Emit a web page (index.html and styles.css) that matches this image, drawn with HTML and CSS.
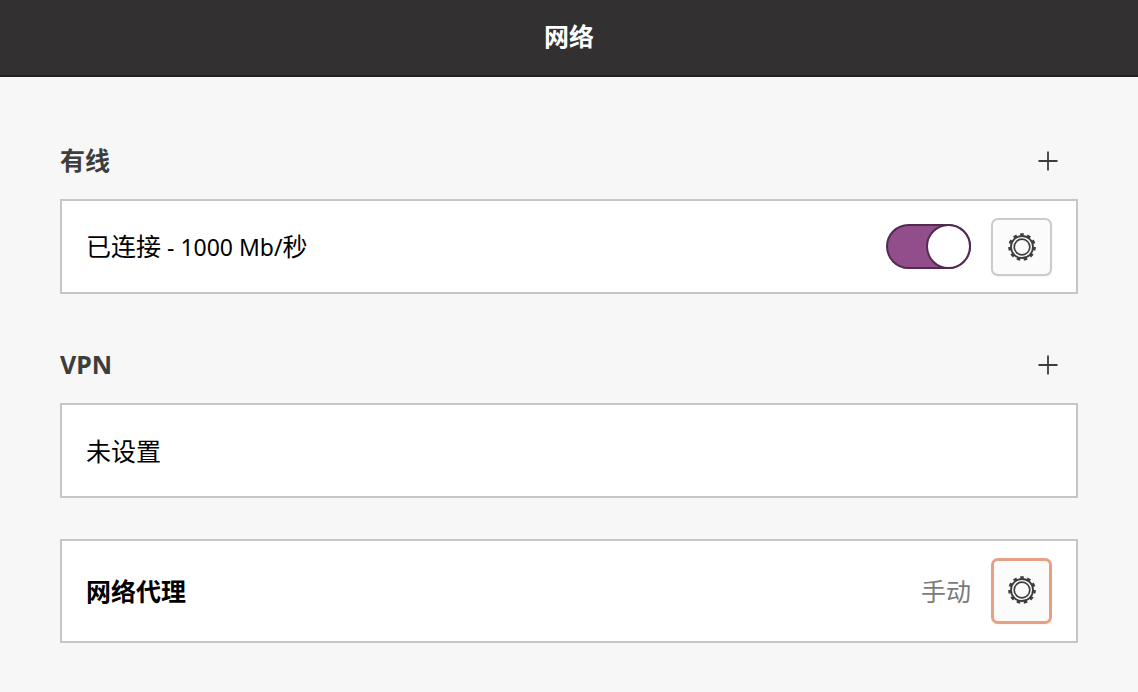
FILE: index.html
```html
<!DOCTYPE html>
<html lang="zh-CN">
<head>
<meta charset="utf-8">
<meta name="viewport" content="width=device-width, initial-scale=1">
<title>网络</title>
<link rel="stylesheet" href="styles.css">
</head>
<body>
<svg class="sprite" aria-hidden="true">
  <symbol id="gear" viewBox="-15 -15 30 30">
    <circle r="11" fill="none" stroke="currentColor" stroke-width="1.8"/>
    <circle r="7.8" fill="none" stroke="currentColor" stroke-width="1.7"/>
    <circle r="12.5" fill="none" stroke="currentColor" stroke-width="2.6" pathLength="110" stroke-dasharray="5 5" stroke-dashoffset="2.5" transform="rotate(-90)"/>
  </symbol>
  <symbol id="plus" viewBox="0 0 20 20">
    <path d="M0.5 10H19.5M10 0.5V19.5" fill="none" stroke="currentColor" stroke-width="1.8"/>
  </symbol>
</svg>
<header class="titlebar"><h1 class="title">网络</h1></header>
<main class="content">
  <section class="group">
    <div class="group-head">
      <h2 class="group-title">有线</h2>
      <button class="add" type="button" aria-label="添加有线连接"><svg class="plus"><use href="#plus"/></svg></button>
    </div>
    <div class="card">
      <label class="name" for="wired">已连接<span class="latin"> - 1000 Mb/</span>秒</label>
      <input class="switch" id="wired" type="checkbox" role="switch" checked>
      <button class="settings" type="button" aria-label="有线设置"><svg class="gear"><use href="#gear"/></svg></button>
    </div>
  </section>
  <section class="group">
    <div class="group-head">
      <h2 class="group-title">VPN</h2>
      <button class="add" type="button" aria-label="添加 VPN"><svg class="plus"><use href="#plus"/></svg></button>
    </div>
    <div class="card"><span class="name">未设置</span></div>
  </section>
  <section class="card card-proxy">
    <h2 class="name name-strong">网络代理</h2>
    <span class="status">手动</span>
    <button class="settings settings-focus" type="button" aria-label="代理设置"><svg class="gear"><use href="#gear"/></svg></button>
  </section>
</main>
</body>
</html>
```
FILE: styles.css
```css
*, *::before { box-sizing: border-box; }
body {
  margin: 0;
  background: #f7f7f7;
  color: #000;
  font: 25px/36px "Noto Sans", "Noto Sans CJK SC", sans-serif;
}
h1, h2 { margin: 0; font-size: inherit; }
.sprite { display: none; }
.titlebar {
  display: flex;
  align-items: center;
  justify-content: center;
  min-height: 77px;
  padding-bottom: 3px;
  background: #333031;
  border-bottom: 2px solid #211f20;
}
.title { color: #fff; font-weight: 700; }
.content { padding: 60px 60px 48px; }
.group { margin-bottom: 41px; }
.group + .group { padding-top: 6px; }
.group-head {
  display: flex;
  align-items: center;
  justify-content: space-between;
  height: 48px;
  margin-bottom: 14px;
  padding-right: 6px;
}
.group-title { padding-bottom: 3px; color: #3d3d3d; font-weight: 700; }
.add {
  display: grid;
  place-items: center;
  width: 48px;
  height: 48px;
  padding: 0;
  border: 0;
  background: none;
  color: #3d3d3d;
}
.plus { width: 20px; height: 20px; }
.card {
  display: flex;
  align-items: center;
  gap: 20px;
  min-height: 95px;
  padding: 16px 24px;
  background: #fff;
  border: 2px solid #c6c6c6;
}
.card-proxy { min-height: 104px; }
.name { flex: 1; }
.name-strong { font-weight: 700; }
.latin { font-size: 23px; white-space: pre; }
.status { color: #7b7b7b; }
.switch {
  appearance: none;
  display: flex;
  justify-content: flex-end;
  width: 85px;
  height: 45px;
  margin: 0;
  border: 2px solid #532a50;
  border-radius: 23px;
  background: #924d8b;
}
.switch::before {
  content: "";
  width: 45px;
  height: 45px;
  margin: -2px;
  border: 2px solid #532a50;
  border-radius: 50%;
  background: #fff;
}
.switch:not(:checked) { justify-content: flex-start; background: #ddd; }
.settings {
  display: grid;
  place-items: center;
  width: 61px;
  height: 58px;
  padding: 0;
  border: 2px solid #cbcbcb;
  border-radius: 7px;
  background: #fbfbfb;
  box-shadow: 0 1px 2px #0000000d;
  color: #3d3d3d;
}
.settings-focus {
  height: 66px;
  padding-bottom: 2px;
  border: 3px solid #e99f84;
}
.gear { width: 30px; height: 30px; }
```
